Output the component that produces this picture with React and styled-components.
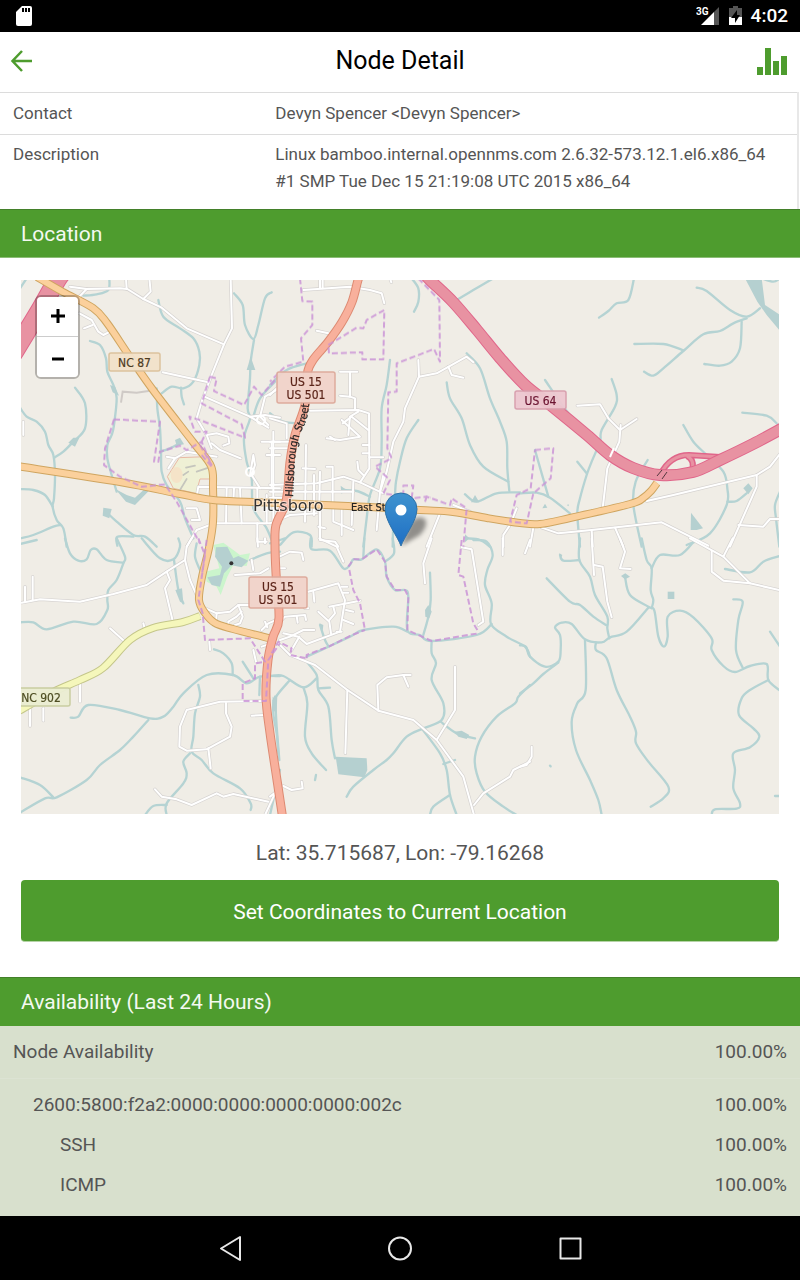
import React from 'react';
import styled, { createGlobalStyle } from 'styled-components';

const green = '#4e9c2e';

const GlobalStyle = createGlobalStyle`
  *, *::before, *::after { box-sizing: border-box; }
  body {
    margin: 0;
    background: #fff;
    color: #555;
    font-family: Roboto, "Liberation Sans", sans-serif;
  }
`;

const Screen = styled.div`
  display: flex;
  flex-direction: column;
  min-height: 100vh;
`;

const StatusBar = styled.div`
  display: flex;
  align-items: center;
  height: 32px;
  padding: 0 12px 0 16px;
  background: #000;
  color: #fff;
`;

const StatusRight = styled.div`
  display: flex;
  align-items: center;
  gap: 9px;
  margin-left: auto;
`;

const Clock = styled.time`
  font-size: 19px;
  line-height: 32px;
  font-weight: 500;
`;

const Header = styled.header`
  display: grid;
  grid-template-columns: 60px 1fr 60px;
  align-items: center;
  height: 60px;
  padding-bottom: 3px;
`;

const Title = styled.h1`
  margin: 0;
  color: #000;
  font-size: 25px;
  line-height: 56px;
  font-weight: 400;
  text-align: center;
`;

const IconButton = styled.button`
  display: flex;
  justify-content: ${(p) => (p.$end ? 'flex-end' : 'flex-start')};
  padding: 0 ${(p) => (p.$end ? 12 : 10)}px;
  border: 0;
  background: none;
`;

const Main = styled.main`
  flex: 1;
  display: flex;
  flex-direction: column;
`;

const DetailTable = styled.table`
  width: calc(100% - 1px);
  border-collapse: collapse;
  border-right: 2px solid #e8e8e8;
  font-size: 17px;
  line-height: 27px;

  tr { border-top: 1px solid #dcdcdc; }
  th, td {
    padding: 7px 13px 7px 12px;
    font-weight: 400;
    text-align: left;
    vertical-align: top;
  }
  th { width: 33%; padding-left: 13px; }
  tr:last-child th, tr:last-child td { padding-top: 6px; padding-bottom: 14px; }
`;

const SectionTitle = styled.h2`
  height: 49px;
  margin: 0;
  padding: 0 21px;
  border-top: 1px solid #43802a;
  border-bottom: 1px solid ${(p) => (p.$flush ? green : '#8bbd76')};
  background: ${green};
  color: #f4f9f1;
  font-size: 21px;
  line-height: 48px;
  font-weight: 400;
`;

const LocationPanel = styled.section`
  display: flex;
  flex-direction: column;
  padding: 22px 21px 35px;
`;

const MapFrame = styled.div`
  position: relative;
  height: 534px;
  overflow: hidden;
  background: #f0ede5;
`;

const MapDrawing = styled.svg`
  display: block;
  width: 100%;
  height: 100%;
`;

const ZoomControl = styled.div`
  position: absolute;
  top: 15px;
  left: 14px;
  display: flex;
  flex-direction: column;
  border: 2px solid rgba(0, 0, 0, 0.25);
  border-radius: 6px;
  background-clip: padding-box;
`;

const ZoomButton = styled.button`
  display: flex;
  align-items: center;
  justify-content: center;
  width: 41px;
  height: 40px;
  padding: 0;
  border: 0;
  border-radius: ${(p) => (p.$top ? '4px 4px 0 0' : '0 0 4px 4px')};
  border-bottom: ${(p) => (p.$top ? '1px solid #ccc' : '0')};
  background: #fff;
  color: #000;
`;

const Marker = styled.svg`
  position: absolute;
  top: 212px;
  left: 50%;
  margin-left: -16px;
`;

const Coordinates = styled.p`
  margin: 23px 0 11px;
  font-size: 21px;
  line-height: 32px;
  text-align: center;
`;

const PrimaryButton = styled.button`
  height: 62px;
  border: 0;
  border-bottom: 1px solid #b5d3a6;
  border-radius: 4px;
  background: ${green};
  color: #fff;
  font-family: inherit;
  font-size: 21px;
  line-height: 62px;
`;

const AvailabilityPanel = styled.section`
  flex: 1;
  background: #d8e0cd;
`;

const AvailabilityTable = styled.table`
  width: 100%;
  border-collapse: collapse;
  font-size: 19px;
  line-height: 40px;

  th, td { padding: 0 13px; font-weight: 400; text-align: left; }
  td { text-align: right; }
`;

const NodeRow = styled.tr`
  border-bottom: 1px solid #dce3d3;
  && > * { padding-top: 6px; padding-bottom: 6px; }
`;

const InterfaceRow = styled.tr`
  && > th { padding-left: 33px; }
  && > * { padding-top: 6px; }
`;

const ServiceRow = styled.tr`
  && > th { padding-left: 60px; }
`;

const NavBar = styled.nav`
  display: flex;
  align-items: center;
  justify-content: center;
  gap: 130px;
  height: 64px;
  background: #000;
`;

const NavButton = styled.button`
  display: flex;
  padding: 0;
  border: 0;
  background: none;
`;

/* The map is surveyed in six squares, each drawn at three units to the pixel. */
const squares = {
  nw: [-1, -5],
  n: [249, -5],
  ne: [499, -5],
  sw: [-1, 260],
  s: [249, 260],
  se: [499, 260],
};

const streams = {
  nw: [
    '0,398 20,425 50,440 75,470 85,510 100,540 105,600 102,670 98,695 110,735 130,760 140,815',
    '165,338 195,385 195,460 160,500 130,530 103,548',
    '0,642 40,645 75,660 98,695',
    '0,790 40,780 100,755 122,750',
    '210,198 240,210 258,250 262,290 280,330 290,370 282,450 275,480 262,510 262,550 275,600 290,650',
    '410,340 412,400 420,460 423,530 425,590 440,630 480,680 495,730 520,790',
    '425,355 455,335 490,340 520,320 538,270 538,230 520,190 480,160 430,125 415,75',
    '483,338 485,365 492,388',
    '258,710 290,740 340,780 375,785 410,815',
    '292,812 292,785 340,785',
    '190,62 230,58 265,45 268,10',
    '20,10 0,40',
    '642,55 668,90 675,150 700,192 715,150 735,70 755,52',
    '702,195 692,260 690,310 683,400 690,430 672,490 680,560 695,610 700,700 740,760 760,810',
    '765,320 720,370 700,425',
    '420,530 450,520 480,505',
  ],
  n: [
    '360,255 350,330 335,400 335,500 330,580 300,660 290,730 280,815',
    '445,435 410,490 390,560 378,620 375,660 370,740 368,815',
    '530,322 540,370 575,430 600,510 640,575 715,620',
    '590,235 630,280 660,370 690,440 710,500 712,580 718,648',
    '425,10 445,40 445,80 432,110',
    '560,75 610,45 670,10',
    '585,658 620,680 680,655 750,652',
    '218,645 260,648 300,665',
    '0,330 50,285 110,265',
    '0,415 40,440 85,445',
    '30,810 70,772 120,780 125,815',
    '590,790 630,795 660,815',
  ],
  ne: [
    '342,10 325,75 290,85 265,108 237,128',
    '530,38 560,48 630,105 680,125 720,100',
    '680,130 640,145 600,168 550,178 490,228 430,280 400,302 372,290',
    '490,226 430,207 343,207',
    '665,140 660,220 635,260 600,272 553,267',
    '275,312 290,360 285,395 245,465 240,500 215,560 200,600 180,670 172,715 180,815',
    '75,315 150,420 240,500',
    '172,560 200,595',
    '383,555 347,620 340,690 365,815',
    '490,450 520,500 560,540 610,590 622,640 620,690 570,775 500,810',
    '622,680 650,678 680,655',
    '667,413 740,422 770,445',
    '45,525 85,665',
    '0,655 50,653 90,668 150,715',
    '780,650 765,690 768,730 778,815',
    '725,10 760,20 780,10',
  ],
  sw: [
    '0,12 50,0',
    '135,-5 150,40 175,62 200,58 212,30 230,28 260,60 310,68',
    '290,-5 315,50 310,70 290,120 265,150 262,180 262,210 230,252 160,245 80,268 40,247 0,247',
    '365,-5 420,55 460,58 480,20 475,-5',
    '462,60 475,150 490,190',
    '530,10 525,50 540,90',
    '152,533 175,530 205,495 300,510 390,535 430,530 460,500 490,460 560,405 640,405 680,430 720,410 780,408',
    '385,540 340,590 300,630 240,675 200,720 110,772 75,775 0,818',
    '0,712 60,735 100,772',
    '535,435 540,470 525,520 520,590 515,635 545,660 580,700 660,745 692,790 692,810',
    '510,640 490,665 500,700 490,730 440,790 440,825',
    '375,825 400,798 440,795',
    '582,328 610,340 635,370 638,405',
    '668,365 700,415',
    '720,410 718,465',
    '765,470 770,560 778,660',
    '690,60 740,40 780,35',
    '780,690 750,825',
  ],
  s: [
    '122,-5 125,28 180,32 220,85 240,75 250,58 275,58 320,28 345,65 350,110 375,150 405,150 415,170 412,270 450,285 485,303 620,285 665,252',
    '283,-5 280,50',
    '368,-5 372,40 345,65',
    '610,0 650,5 668,45 652,90 645,135 665,190 663,252 710,290 765,320 780,350',
    '480,98 482,180 475,230 460,285',
    '150,255 165,300 175,318',
    '110,350 180,318 240,290 280,270 370,260 412,275',
    '485,303 485,340 498,370 485,420 520,490 515,540 460,565 410,590 370,640 350,660 310,690 250,740 230,770',
    '512,545 560,580 615,595',
    '455,565 510,640 530,690 540,765 560,825',
    '540,765 490,800 480,825',
    '520,672 555,660',
    '110,365 140,405 145,450 175,500 185,600 195,655',
    '145,445 180,443',
    '5,408 40,408 100,442 140,415',
    '60,420 15,475 10,520 20,580 25,640',
    '100,442 112,490 105,590 125,640 168,690',
    '138,705 135,720',
    '0,10 30,0 45,-5',
    '780,435 745,470 735,490 680,530 635,590 615,650 620,700 645,755 700,800 740,825',
  ],
  se: [
    '180,-5 178,60 210,110 225,165 262,230 262,265 268,295',
    '120,45 130,62 178,60',
    '80,115 150,185 180,195 220,230 258,255',
    '0,316 18,320 30,350 75,380 115,365 122,330 120,285 105,262 125,248 155,252 195,298 245,307 270,292 320,275 385,203',
    '115,368 70,402 40,430 0,460',
    '315,110 330,165 385,200 403,212 415,290 432,320 443,290 443,230 480,212 520,232 575,295 575,330 610,378 645,396 690,378 740,372 745,420 780,452',
    '365,-5 380,60 395,85 392,150 400,180 395,205',
    '395,85 420,45 480,45 525,0',
    '195,300 197,450 172,490 155,545 168,630 210,720 235,780 245,825',
    '228,308 228,330 260,355 290,450 330,530 348,575 348,610 385,665 445,740 430,775 392,800',
    '640,178 668,185 655,240 648,330 668,383',
    '745,420 690,450 665,475 657,525 700,565 718,590 690,622 640,640 645,690 640,745 660,790 650,806 585,808 575,825',
    '615,87 690,97 730,65 780,48',
    '750,275 780,320',
    '765,768 785,768',
    '90,677 92,679',
  ],
};

const lakes = {
  nw: [
    '680,285 692,245 706,285',
    '145,503 160,488 178,488 165,515',
    '270,330 285,335 297,362 278,352',
    '250,698 275,702 268,730 248,722',
    '286,642 320,660 345,668 378,638 392,642 345,690 318,680',
    '465,495 480,488 492,508 470,512',
  ],
  n: ['212,632 222,640 234,645 214,656', '603,682 615,660 628,682', '585,778 598,790 585,802'],
  ne: [
    '675,10 725,10 735,90 780,120 780,168 740,120 712,80',
    '513,713 549,760 530,765 512,765',
    '670,640 685,625 698,640 685,658',
    '67,700 75,686 82,698',
    '140,690 146,688 146,694',
  ],
  sw: ['466,150 486,145 490,190 480,185', '757,480 772,465 770,520 758,500'],
  s: [
    '197,650 290,655 292,690 283,712 205,703',
    '465,210 475,195 485,215 478,235 466,230',
    '553,575 575,572 598,585 590,597 565,590',
    '8,470 20,480 16,515 6,510',
    '148,250 160,255 158,272',
  ],
  se: ['443,155 463,155 463,177 443,177', '303,108 316,100 330,110 315,118', '117,40 127,45 122,56'],
};

const streets = {
  nw: [
    '150,35 200,42 300,40 322,42 370,72 425,98 500,160 612,208',
    '200,42 178,65',
    '318,10 320,42',
    '388,10 392,50 370,72',
    '632,10 636,160 612,208 575,300 545,380 530,430 560,480 575,520',
    '178,115 215,135 235,170 250,180 270,170',
    '192,160 218,150',
    '428,292 565,322',
    '553,365 690,425 745,458',
    '690,425 735,420 780,428',
    '770,345 735,365 720,425 745,450',
    '560,480 590,475 625,485 628,505 610,512',
    '575,505 600,525 662,550',
    '440,545 465,550 500,530 590,545',
    '465,550 445,580',
    '530,665 535,635 780,640',
    '620,640 618,745',
    '640,680 642,640',
    '660,640 665,745',
    '585,745 780,745',
    '500,815 530,765 570,750',
    '500,700 530,700 540,735 515,735',
    '712,640 712,690',
    '690,600 700,540 705,570 695,600 720,640',
    '725,500 780,500',
    '755,500 755,640',
    '740,540 780,540',
    '712,745 712,800 740,800',
    '740,660 740,745',
    '10,440 10,480',
  ],
  n: [
    '100,45 240,35 300,45 335,55 343,85',
    '150,10 150,40',
    '158,10 158,40',
    '140,167 175,175',
    '210,290 262,290',
    '240,290 240,365 255,370 255,405',
    '210,362 240,365',
    '120,407 265,405 297,415 298,580 270,622',
    '215,435 270,485 210,495 170,490',
    '180,485 195,495',
    '235,480 240,425 265,410',
    '218,445 245,425 295,465',
    '278,510 298,510',
    '278,535 298,535',
    '298,547 340,547',
    '445,255 447,305 405,400 400,440 370,500 350,590 330,650 320,765',
    '447,305 500,295 590,245 610,262',
    '535,275 545,300 580,308',
    '0,630 140,625 220,605 270,622 340,655',
    '0,650 250,650',
    '0,668 60,668',
    '108,510 105,740',
    '150,590 148,680',
    '132,600 132,720',
    '170,575 188,575 188,680',
    '98,580 135,582',
    '262,560 265,585 280,600',
    '0,500 60,500',
    '0,520 60,520',
    '10,470 10,740',
    '0,745 60,720 140,715',
    '150,700 150,795 195,800 205,815',
    '145,755 165,760',
    '190,690 190,740 250,765',
    '215,700 215,780',
    '250,620 245,750',
    '510,715 470,815',
    '550,690 600,710',
    '740,700 720,750 700,780 700,815',
    '0,430 50,445 50,490',
    '0,360 20,340',
    '340,600 330,650',
    '360,10 364,22',
  ],
  ne: [
    '172,392 240,388 265,430 300,465 350,432',
    '302,450 298,500 262,580 248,700',
    '380,678 460,660 710,600 750,575 785,530',
    '710,600 710,635 630,815',
    '655,750 730,755 750,732 785,732',
    '65,758 115,775 215,765 425,742 565,812',
    '40,758 30,815',
    '215,765 218,815',
    '285,758 310,815',
  ],
  sw: [
    '5,188 60,178 180,185 280,162 380,135 440,95 495,60 500,20 515,-5',
    '15,140 15,185',
    '38,110 38,180',
    '440,95 450,120 435,145 458,242',
    '495,60 510,120 545,200 590,220 630,215 655,195 690,195',
    '655,195 668,230 660,250 645,255',
    '590,220 588,245',
    '625,260 625,245 650,230 665,215',
    '270,265 315,305',
    '370,250 375,270',
    '180,430 180,485',
    '30,500 30,558',
    '70,505 70,542',
    '735,483 600,485 500,510 480,560 478,620 500,632 560,628 630,590 635,560 618,520 618,485',
    '565,625 572,685',
    '405,748 425,770 470,778 515,795 590,760 610,770 640,762 745,785',
    '735,825 765,760',
    '695,527 735,525',
    '645,105 720,100 745,85',
    '695,60 700,90',
    '568,305 570,330',
    '700,330 708,365',
    '712,-5 714,20',
    '735,-5 735,10',
    '780,235 745,250 725,270',
    '735,245 742,262',
    '725,320 755,310',
  ],
  s: [
    '28,50 60,35 95,38 100,60',
    '25,85 45,85',
    '115,155 205,130 225,180 210,275 110,312 85,290 40,280',
    '130,155 133,185',
    '145,215 178,245 183,280',
    '178,240 195,220 190,200',
    '178,200 270,182',
    '215,140 232,140',
    '220,158 235,158',
    '228,210 250,215',
    '220,240 250,252',
    '200,275 215,275',
    '35,240 45,230 105,225 108,240',
    '80,228 83,248',
    '105,205 115,205',
    '30,300 60,290 100,270 133,270',
    '88,290 65,330',
    '25,310 60,345 135,375 232,450 325,512 430,540 500,600 580,710 612,825',
    '232,450 226,640',
    '325,512 322,435 350,412 400,405 415,440',
    '400,405 422,405',
    '500,600 555,510 555,380',
    '612,795 640,760 720,710 730,690 780,665',
    '575,22 605,28 640,245 625,255',
    '485,-5 460,70 465,130',
    '40,738 65,750 98,745 95,725',
    '0,770 20,755',
    '148,-5 200,20 220,65',
    '698,-5 698,45',
    '780,0 765,40',
  ],
  se: [
    '215,-5 222,105',
    '222,75 248,80 262,185 275,232',
    '300,-5 315,35 300,85 332,87',
    '510,-5 610,50 690,130 785,152',
    '575,35 575,95 610,122 690,130',
    '638,-5 610,50',
    '35,620 35,650 20,675 0,680',
  ],
};

const limits = {
  nw: [
    '282,433 420,440 402,560 415,560 420,530 480,512 500,525 545,500 575,572',
    '282,433 255,520 252,570 300,605 365,635 435,628 470,680 540,805',
    '570,305 590,310 582,348 672,390 702,335 725,360 765,315',
    '570,305 545,385 665,448 675,488 540,435 508,425 525,470 560,470 540,510 575,570',
    '545,540 575,575',
  ],
  n: [
    '90,10 97,78 127,80 127,150 93,190 100,260 45,275 0,320',
    '175,210 260,158 280,160 290,135 343,105 340,253 277,253 277,232 177,235 175,210',
    '445,10 508,75 510,260 492,222 380,265 380,350 355,352 352,520 365,550 315,575 360,615 340,655 400,665 400,632 430,632 425,670 470,665 540,690 545,670 590,700 580,815',
    '465,680 470,665 482,668',
  ],
  ne: ['45,525 100,520 92,610 40,655 20,745 -30,740 -10,660 32,640 45,525'],
  sw: [
    '535,-5 555,45 535,180 548,220 555,300 690,295 735,365 705,370 705,415 668,430 668,483 738,483 745,360 780,310',
    '560,0 545,110',
  ],
  s: [
    '110,355 110,345 180,318 240,288 285,270',
    '238,90 250,150 270,190 285,270',
    '235,80 250,58 275,58 320,28 345,65 350,110 375,150 405,150 415,170 412,270 485,303 625,280',
    '575,0 565,105 580,110 610,250 625,275',
    '5,340 25,305 65,325 60,345 110,355',
  ],
};

const roads = {
  trunkWest: '42,-8 36,0 20,28 -3,66 -20,94',
  trunk: '402,-8 409,0 432,22 456,50 479,78 504,105 532,127 566,155 589,175 612,188 639,195 672,192 699,180 732,164 762,148',
  primary: '340,-8 337,0 331,22 321,42 307,62 292,80 286,95 284,125 274,155 269,182 267,208 264,225 255,245 254,265 255,293 258,338 252,357 247,380 245,417 249,453 256,500 262,540',
  nc87: '16,-3 42,12 72,28 86,43 109,77 132,110 172,162 190,186 192,208 192,242 188,268 181,297 178,320 184,333 194,343 212,349 251,359',
  east: '-4,186 99,202 159,214 192,220 232,222 304,225 349,227 399,230 432,232 466,238 499,243 519,244 549,238 609,224 622,218 630,211 636,203',
  nc902: '-4,432 32,412 59,400 82,388 109,360 132,348 162,342 179,336',
};

/* Catmull-Rom spline through the given points, as a path of cubic segments. */
function spline(list) {
  const p = list.split(' ').map((s) => s.split(',').map(Number));
  let d = `M${p[0]}`;
  for (let i = 0; i < p.length - 1; i += 1) {
    const a = p[i - 1] || p[i];
    const b = p[i];
    const c = p[i + 1];
    const e = p[i + 2] || c;
    d += `C${b[0] + (c[0] - a[0]) / 6},${b[1] + (c[1] - a[1]) / 6} ${c[0] - (e[0] - b[0]) / 6},${c[1] - (e[1] - b[1]) / 6} ${c}`;
  }
  return d;
}

const Layer = ({ data, children, ...rest }) => (
  <g fill="none" strokeLinecap="round" strokeLinejoin="round" {...rest}>
    {Object.entries(data).map(([name, items]) => (
      <g key={name} transform={`translate(${squares[name]}) scale(${1 / 3})`}>
        {items.map(children)}
      </g>
    ))}
  </g>
);

const Road = ({ line, casing, fill, width }) => (
  <g fill="none" strokeLinejoin="round">
    <path d={spline(line)} stroke={casing} strokeWidth={width} />
    <path d={spline(line)} stroke={fill} strokeWidth={width - 2} />
  </g>
);

const Shield = ({ x, y, w, h, fill, stroke, color, lines }) => (
  <g>
    <rect x={x} y={y} width={w} height={h} rx="2" fill={fill} stroke={stroke} strokeWidth="1.5" opacity="0.95" />
    {lines.map((t, i) => (
      <text key={t} x={x + w / 2} y={y + 14 + i * 13} fill={color} stroke={color} strokeWidth="0.2" textAnchor="middle" fontSize="12" fontFamily='"DejaVu Sans Condensed", "Noto Sans", sans-serif'>
        {t}
      </text>
    ))}
  </g>
);

const TownMap = () => (
  <MapDrawing viewBox="0 0 758 534" preserveAspectRatio="xMidYMid slice" role="img" aria-label="Map of Pittsboro">
    <rect width="758" height="534" fill="#f0ede6" />
    <g transform="translate(-1 -5) scale(0.33333)">
      <path d="M442,605 L478,548 L560,545 L575,572 L575,612 L540,612 L528,655 L460,640Z" fill="#eff0d5" stroke="#e8b9a4" strokeWidth="3" />
      <ellipse cx="470" cy="600" rx="18" ry="24" fill="#f5e3c8" />
      <path d="M480,645 L500,612 M498,578 L525,572 M530,590 L575,575 M505,590 L490,600" fill="none" stroke="#c5c5bd" strokeWidth="5" strokeLinecap="round" />
      <path d="M303,383 L308,350 L350,353 L390,347" fill="none" stroke="#cfcac6" strokeWidth="6" />
    </g>
    <g transform="translate(-1 260) scale(0.33333)">
      <path d="M580,15 L610,8 L640,30 L660,45 L690,40 L680,78 L640,75 L622,110 L602,165 L590,140 L560,125 L556,95 L598,85Z" fill="#cbf5cc" />
      <path d="M588,22 L622,20 L640,55 L655,48 L685,62 L665,82 L635,76 L612,100 L600,140 L575,135 L562,112 L600,105 L606,80 L585,50Z" fill="#b5d0d0" />
      <circle cx="634" cy="70" r="6" fill="#333" />
    </g>
    <Layer data={streams} stroke="#b5d3d3" strokeWidth="7">
      {(line) => <path key={line} d={spline(line)} />}
    </Layer>
    <Layer data={lakes}>
      {(points) => <polygon key={points} points={points} fill="#b5d0d0" />}
    </Layer>
    <Layer data={streets} stroke="#d5d2d0" strokeWidth="10">
      {(line) => <polyline key={line} points={line} />}
    </Layer>
    <Layer data={streets} stroke="#fff" strokeWidth="6">
      {(line) => <polyline key={line} points={line} />}
    </Layer>
    <circle cx="240" cy="140" r="4" fill="none" stroke="#fff" strokeWidth="2" />
    <circle cx="229" cy="192" r="4" fill="none" stroke="#fff" strokeWidth="2" />

    <path d="M639,195 Q649,175 668,175 L699,177 M666,176 Q674,180 671,190" fill="none" stroke="#e0668a" strokeWidth="6" />
    <path d="M639,195 Q649,175 668,175 L699,177 M666,176 Q674,180 671,190" fill="none" stroke="#e892a2" strokeWidth="3" />
    <Road line={roads.trunkWest} casing="#e0668a" fill="#e892a2" width={19} />
    <Road line={roads.trunk} casing="#e0668a" fill="#e892a2" width={12} />
    <path d="M589,177 L593,168" stroke="#fff" strokeWidth="2" />
    <Road line={roads.nc902} casing="#c4c68a" fill="#f5f7bb" width={8} />
    <Road line={roads.nc87} casing="#cfa560" fill="#fbd09c" width={8} />
    <Road line={roads.east} casing="#cfa560" fill="#fbd09c" width={8} />
    <Road line={roads.primary} casing="#dd8a72" fill="#f8b09c" width={9} />
    <path d="M636,196 L641,190 M641,199 L646,192" stroke="#55383f" strokeWidth="1" />

    <Layer data={limits} stroke="#c98fd6" strokeWidth="6" strokeDasharray="18 9" opacity="0.8">
      {(line) => <polyline key={line} points={line} strokeLinecap="butt" />}
    </Layer>

    <Shield x={88} y={73} w={51} h={18} fill="#f3e2ca" stroke="#dcc19a" color="#4d3b1e" lines={['NC 87']} />
    <Shield x={256} y={92} w={58} h={31} fill="#f1d3ca" stroke="#dda999" color="#5c2419" lines={['US 15', 'US 501']} />
    <Shield x={228} y={297} w={58} h={31} fill="#f1d3ca" stroke="#dda999" color="#5c2419" lines={['US 15', 'US 501']} />
    <Shield x={494} y={111} w={51} h={18} fill="#ecc8d0" stroke="#d79dac" color="#6b1431" lines={['US 64']} />
    <Shield x={-9} y={408} w={58} h={18} fill="#ebeed3" stroke="#c8cc9f" color="#4d4d22" lines={['NC 902']} />

    <path id="hillsborough" d="M272,217 L274,180 Q276,158 282,148 Q288,138 289,112" fill="none" />
    <g fontFamily='"DejaVu Sans Condensed", "Noto Sans", sans-serif' fill="#222">
      <text fontSize="11" stroke="#222" strokeWidth="0.2">
        <textPath href="#hillsborough">Hillsborough Street</textPath>
      </text>
      <text x="330" y="231" fontSize="11" stroke="#222" strokeWidth="0.2">East Street</text>
      <text x="232" y="231" fontSize="16" fill="#333" fontFamily='"DejaVu Sans", sans-serif' stroke="#fff" strokeOpacity="0.5" strokeWidth="2" paintOrder="stroke">Pittsboro</text>
    </g>
  </MapDrawing>
);

const MapMarker = () => (
  <Marker width="54" height="56" viewBox="0 0 54 56" aria-hidden="true">
    <defs>
      <linearGradient id="pin" x1="0" y1="0" x2="0" y2="1">
        <stop offset="0" stopColor="#3f93cf" />
        <stop offset="1" stopColor="#1f6fc4" />
      </linearGradient>
      <filter id="soft" x="-20%" y="-20%" width="140%" height="140%">
        <feGaussianBlur stdDeviation="2" />
      </filter>
    </defs>
    <path d="M17,54 L26,31 Q34,22 41,27 Q45,33 36,43Z" fill="#000" opacity="0.4" filter="url(#soft)" />
    <path d="M17,54 C14,45 1,29 1,17 A16,16 0 0 1 33,17 C33,29 20,45 17,54Z" fill="url(#pin)" stroke="#2d71a8" />
    <circle cx="17" cy="18" r="5.5" fill="#fff" />
  </Marker>
);

const SdCardIcon = () => (
  <svg width="16" height="20" viewBox="0 0 16 20" aria-hidden="true">
    <path d="M6,0 H14 Q16,0 16,2 V18 Q16,20 14,20 H2 Q0,20 0,18 V6Z" fill="#fff" />
    <path d="M7,2 V6 M10,2 V6 M13,2 V6" stroke="#000" strokeWidth="2" />
  </svg>
);

const SignalIcon = () => (
  <svg width="24" height="20" viewBox="0 0 24 20" role="img" aria-label="3G signal">
    <path d="M23,1 V19 H18 V6Z" fill="#555" />
    <path d="M18,6 V19 H5Z" fill="#fff" />
    <text x="0" y="9" fill="#fff" fontSize="10" fontWeight="700" fontFamily="Roboto, sans-serif">3G</text>
  </svg>
);

const BatteryIcon = () => (
  <svg width="13" height="20" viewBox="0 0 13 20" role="img" aria-label="Charging">
    <path d="M0,2 H4 V0 H9 V2 H13 V12 H0Z" fill="#555" />
    <path d="M0,11 H13 V19 H0Z" fill="#fff" />
    <path d="M8,4 L2,12 H6 V17 L11,9 H8Z" fill="#000" />
  </svg>
);

const services = ['SSH', 'ICMP'];

export default function App() {
  return (
    <Screen>
      <GlobalStyle />
      <StatusBar>
        <SdCardIcon />
        <StatusRight>
          <SignalIcon />
          <BatteryIcon />
          <Clock>4:02</Clock>
        </StatusRight>
      </StatusBar>

      <Header>
        <IconButton aria-label="Back">
          <svg width="24" height="24" viewBox="0 0 24 24" fill="none" stroke={green} strokeWidth="2.5">
            <path d="M22,12 H3 M12,2 L2.500,12 L12,22" />
          </svg>
        </IconButton>
        <Title>Node Detail</Title>
        <IconButton $end aria-label="Graphs">
          <svg width="31" height="28" viewBox="0 0 31 28" fill={green}>
            <path d="M0,20 H6 V28 H0Z M8,1 H14 V28 H8Z M16,14 H22 V28 H16Z M24,9 H30 V28 H24Z" />
          </svg>
        </IconButton>
      </Header>

      <Main>
        <DetailTable>
          <tbody>
            <tr>
              <th scope="row">Contact</th>
              <td>Devyn Spencer &lt;Devyn Spencer&gt;</td>
            </tr>
            <tr>
              <th scope="row">Description</th>
              <td>Linux bamboo.internal.opennms.com 2.6.32-573.12.1.el6.x86_64 #1 SMP Tue Dec 15 21:19:08 UTC 2015 x86_64</td>
            </tr>
          </tbody>
        </DetailTable>

        <SectionTitle>Location</SectionTitle>
        <LocationPanel>
          <MapFrame>
            <TownMap />
            <MapMarker />
            <ZoomControl>
              <ZoomButton $top aria-label="Zoom in">
                <svg width="16" height="16" viewBox="0 0 16 16" stroke="#000" strokeWidth="3">
                  <path d="M1,7 H15 M8,0 V14" />
                </svg>
              </ZoomButton>
              <ZoomButton aria-label="Zoom out">
                <svg width="16" height="16" viewBox="0 0 16 16" stroke="#000" strokeWidth="3">
                  <path d="M2,10 H14" />
                </svg>
              </ZoomButton>
            </ZoomControl>
          </MapFrame>
          <Coordinates>Lat: 35.715687, Lon: -79.16268</Coordinates>
          <PrimaryButton>Set Coordinates to Current Location</PrimaryButton>
        </LocationPanel>

        <SectionTitle $flush>Availability (Last 24 Hours)</SectionTitle>
        <AvailabilityPanel>
          <AvailabilityTable>
            <tbody>
              <NodeRow>
                <th scope="row">Node Availability</th>
                <td>100.00%</td>
              </NodeRow>
              <InterfaceRow>
                <th scope="row">2600:5800:f2a2:0000:0000:0000:0000:002c</th>
                <td>100.00%</td>
              </InterfaceRow>
              {services.map((name) => (
                <ServiceRow key={name}>
                  <th scope="row">{name}</th>
                  <td>100.00%</td>
                </ServiceRow>
              ))}
            </tbody>
          </AvailabilityTable>
        </AvailabilityPanel>
      </Main>

      <NavBar>
        <NavButton aria-label="Back">
          <svg width="40" height="40" viewBox="0 0 40 40" fill="none" stroke="#e8e8e8" strokeWidth="2" strokeLinejoin="round">
            <path d="M30,9 V32 L11,20.500Z" />
          </svg>
        </NavButton>
        <NavButton aria-label="Home">
          <svg width="40" height="40" viewBox="0 0 40 40" fill="none" stroke="#e8e8e8" strokeWidth="2">
            <circle cx="20" cy="20.500" r="11" />
          </svg>
        </NavButton>
        <NavButton aria-label="Recent apps">
          <svg width="40" height="40" viewBox="0 0 40 40" fill="none" stroke="#e8e8e8" strokeWidth="2" strokeLinejoin="round">
            <path d="M10.500,10.500 H30.500 V30.500 H10.500Z" />
          </svg>
        </NavButton>
      </NavBar>
    </Screen>
  );
}
